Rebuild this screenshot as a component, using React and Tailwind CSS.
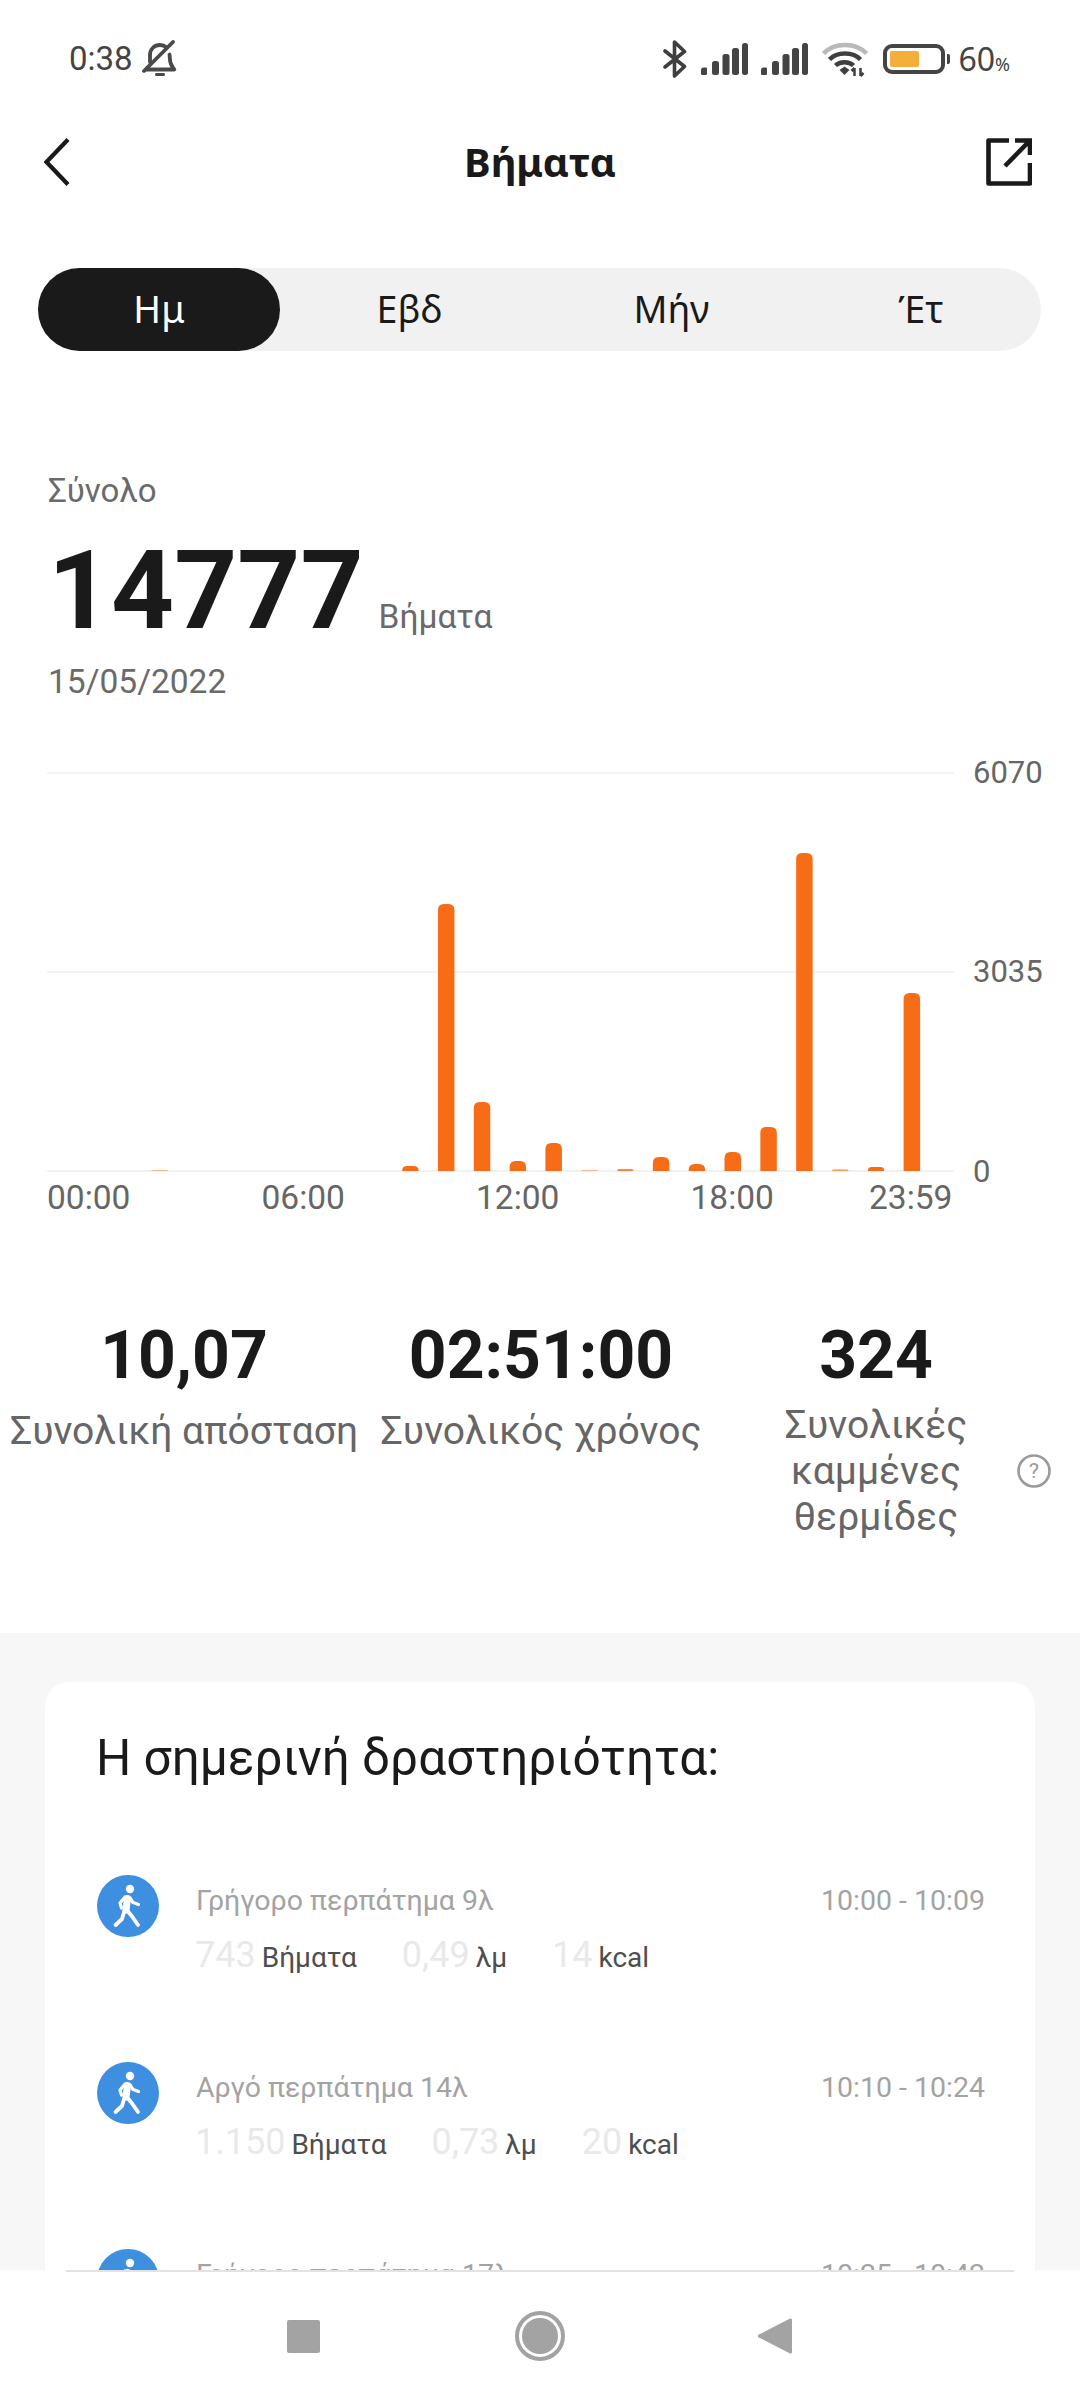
import React from "react";

const bars = [
  [2, 1, 0.45], [9, 5, 1], [10, 267, 1], [11, 69, 1], [12, 10, 1], [13, 28, 1], [14, 1, 0.45], [15, 2, 0.8],
  [16, 14, 1], [17, 7, 1], [18, 19, 1], [19, 44, 1], [20, 318, 1], [21, 1.5, 0.7], [22, 4, 1], [23, 178, 1],
];

function Chart() {
  const x = (h) => 88 + h * 35.82;
  return (
    <svg width="1080" height="412" viewBox="0 0 1080 412" className="block">
      <rect x="47" y="0" width="907" height="2" fill="#f3f3f3" />
      <rect x="47" y="199" width="907" height="2" fill="#f3f3f3" />
      <rect x="47" y="398" width="907" height="2" fill="#f1f1f1" />
      {bars.map(([h, v, o]) => {
        const bx = x(h) - 8.25;
        const top = 399 - v;
        const r = Math.min(6, v);
        return (
          <path
            key={h}
            d={`M${bx} 399 V${top + r} Q${bx} ${top} ${bx + r} ${top} H${bx + 16.5 - r} Q${bx + 16.5} ${top} ${bx + 16.5} ${top + r} V399 Z`}
            fill="#f76d17"
            opacity={o}
          />
        );
      })}
    </svg>
  );
}

function Signal() {
  return (
    <svg width="47" height="32" viewBox="0 0 47 32" fill="#444">
      <path d="M0 27a2.500 2.500 0 0 1 2.500-2.500h2.500a1 1 0 0 1 1 1V31a1 1 0 0 1-1 1H1a1 1 0 0 1-1-1z" />
      <rect x="11" y="18" width="7" height="14" rx="2.500" />
      <rect x="21.500" y="11" width="7" height="21" rx="2.500" />
      <rect x="31" y="5" width="7" height="27" rx="2.500" />
      <rect x="41" y="0" width="6" height="32" rx="2.500" />
    </svg>
  );
}

function Walker() {
  return (
    <svg width="62" height="62" viewBox="0 0 62 62" fill="none" stroke="#fff" strokeLinecap="round" strokeLinejoin="round">
      <circle cx="33" cy="14" r="4.200" fill="#fff" stroke="none" />
      <path d="M30.500 23.500 29 35" strokeWidth="7" />
      <path d="M29 34 35.500 42 41 50" strokeWidth="3.800" />
      <path d="M27 37 25 44 18.500 50" strokeWidth="3.800" />
      <path d="M28 22 23 28 24.500 33" strokeWidth="3.200" />
      <path d="M33 23 36 27.500 41.500 29.500" strokeWidth="3.200" />
    </svg>
  );
}

function Activity({ title, time, steps, km, kcal }) {
  const Stat = ({ n, u }) => (
    <div className="flex items-baseline gap-[6px]">
      <span className="text-[36px] leading-[40px] text-[#e9e9e9]">{n}</span>
      <span className="text-[28px] leading-[40px] text-[#4e4e4e]">{u}</span>
    </div>
  );
  return (
    <div className="flex h-[187px] shrink-0">
      <div className="mt-[2px] h-[62px] w-[62px] shrink-0 rounded-full bg-[#3f8fe0]">
        <Walker />
      </div>
      <div className="ml-[36px] flex-1 pt-[10px]">
        <div className="flex items-center justify-between pl-[1px] text-[28.5px] leading-[36px] text-[#a3a3a3]">
          <span>{title}</span>
          <span>{time}</span>
        </div>
        <div className="mt-[16px] flex gap-[45px]">
          <Stat n={steps} u="Βήματα" />
          <Stat n={km} u="λμ" />
          <Stat n={kcal} u="kcal" />
        </div>
      </div>
    </div>
  );
}

export default function App() {
  return (
    <div className="flex h-[2400px] w-[1080px] flex-col overflow-hidden bg-white font-['Roboto',sans-serif]">
      <div className="flex-1 overflow-hidden">
        {/* status bar */}
        <div className="flex h-[118px] items-start justify-between pl-[69px] pr-[70px] pt-[39px] text-[#444]">
          <div className="flex items-center gap-[8px]">
            <span className="text-[33px] leading-[40px]">0:38</span>
            <svg width="38" height="38" viewBox="0 0 38 38" fill="none" stroke="#4a4a4a" strokeWidth="3.800" strokeLinecap="round" strokeLinejoin="round">
              <path d="M9 22V15c0-6 4.500-10 10-10 2.500 0 4.800.9 6.500 2.400" />
              <path d="M28.500 14.500c.2 1 .3 2 .3 3 0 5 1 7 2.500 9l2 3H5l2-2.300" />
              <path d="M3 31 32 2" />
              <path d="M15.500 34.500h7" strokeWidth="3" />
            </svg>
          </div>
          <div className="flex items-center">
            <svg width="24" height="38" viewBox="0 0 24 38" fill="none" stroke="#3f3f3f" strokeWidth="3.600" strokeLinecap="round" strokeLinejoin="round">
              <path d="M2 11 21.500 26.500 11.500 36V2L21.500 11.500 2 27" />
            </svg>
            <div className="ml-[14px]"><Signal /></div>
            <div className="ml-[13px]"><Signal /></div>
            <svg className="ml-[14px]" width="46" height="36" viewBox="0 0 46 36" fill="none">
              <path d="M1.500 12.500C12 1 34 1 44.500 12.500" stroke="#b9b9b9" strokeWidth="4.500" />
              <path d="M7.500 18.500C15 10.500 31 10.500 38.500 18.500" stroke="#3f3f3f" strokeWidth="4.500" />
              <path d="M13.500 24.500C18 20 27 20 31.500 24.500" stroke="#3f3f3f" strokeWidth="4.500" />
              <path d="M17.500 29 22.500 25.500 27.500 29 22.500 34Z" fill="#3f3f3f" />
              <path d="M32.500 27V35M29.500 30l3-3M38.500 35V27M41.500 32l-3 3" stroke="#3f3f3f" strokeWidth="2.500" />
            </svg>
            <div className="ml-[15px] flex items-center">
              <div className="h-[30px] w-[62px] rounded-[9px] border-[4px] border-[#444] p-[3px]">
                <div className="h-full w-[29px] rounded-[2px] bg-[#f4ae3b]" />
              </div>
              <div className="ml-[2px] h-[10px] w-[3px] rounded-r-[2px] bg-[#444]" />
            </div>
            <span className="ml-[8px] text-[32px] leading-[40px] font-['Noto_Sans',sans-serif]">60</span>
            <span className="mt-[10px] text-[18px] leading-[20px] font-['Noto_Sans',sans-serif]">%</span>
          </div>
        </div>

        {/* header */}
        <div className="flex h-[88px] items-center justify-between pl-[44px] pr-[48px]">
          <div className="w-[50px]">
            <svg width="26" height="48" viewBox="0 0 26 48" fill="none" stroke="#1a1a1a" strokeWidth="4.200">
              <path d="M24 1.500 2.500 24 24 46.500" />
            </svg>
          </div>
          <span className="text-[40px] leading-[50px] font-bold text-[#1a1a1a] font-['Noto_Sans',sans-serif]">Βήματα</span>
          <svg width="46" height="48" viewBox="0 0 46 48" fill="none" stroke="#1a1a1a" strokeWidth="4.600">
            <path d="M23 2.500H2.500V45.500H44V25" strokeLinejoin="round" />
            <path d="M19 28 43 3.500M29 2.500H44V17" />
          </svg>
        </div>

        {/* tabs */}
        <div className="ml-[38px] mr-[39px] mt-[62px] flex h-[83px] items-center rounded-full bg-[#f1f1f1] text-[37.5px] text-[#1a1a1a] font-['Noto_Sans',sans-serif]">
          <div className="flex h-full w-[242px] items-center justify-center rounded-full bg-[#1a1a1a] text-white">Ημ</div>
          <div className="flex w-[259px] items-center justify-center">Εβδ</div>
          <div className="flex w-[265px] items-center justify-center">Μήν</div>
          <div className="flex w-[234px] items-center justify-center">Έτ</div>
        </div>

        {/* summary */}
        <div className="pl-[48px] pt-[120px]">
          <div className="text-[33px] leading-[40px] text-[#6a6a6a]">Σύνολο</div>
          <div className="mt-[24px] flex items-baseline">
            <span className="text-[110px] leading-[112px] font-bold text-[#1a1a1a]">14777</span>
            <span className="ml-[15px] text-[33.5px] text-[#6a6a6a]">Βήματα</span>
          </div>
          <div className="mt-[15px] text-[33.5px] leading-[40px] text-[#6a6a6a]">15/05/2022</div>
        </div>

        {/* chart */}
        <div className="relative mt-[70px]">
          <Chart />
          <span className="absolute left-[973px] top-[-19px] text-[31px] leading-[40px] text-[#666]">6070</span>
          <span className="absolute left-[973px] top-[180px] text-[31px] leading-[40px] text-[#666]">3035</span>
          <span className="absolute left-[973px] top-[380px] text-[31px] leading-[40px] text-[#666]">0</span>
          <div className="absolute left-[47px] top-[406px] flex text-[33.5px] leading-[40px] text-[#666]">
            <span className="w-[214.500px]">00:00</span>
            <span className="w-[214.500px]">06:00</span>
            <span className="w-[214.500px]">12:00</span>
            <span className="w-[178.500px]">18:00</span>
            <span>23:59</span>
          </div>
        </div>

        {/* stats */}
        <div className="mt-[132px] flex h-[317px] items-start">
          <div className="w-[368px] text-center">
            <div className="text-[66px] leading-[80px] font-bold text-[#1a1a1a]">10,07</div>
            <div className="mt-[12px] text-[39px] leading-[46px] text-[#666] whitespace-nowrap">Συνολική απόσταση</div>
          </div>
          <div className="ml-[3px] w-[340px] text-center">
            <div className="text-[66px] leading-[80px] font-bold text-[#1a1a1a]">02:51:00</div>
            <div className="mt-[12px] text-[39px] leading-[46px] text-[#666] whitespace-nowrap">Συνολικός χρόνος</div>
          </div>
          <div className="ml-[37px] w-[256px] text-center">
            <div className="text-[66px] leading-[80px] font-bold text-[#1a1a1a]">324</div>
            <div className="mt-[6px] text-[39px] leading-[46px] text-[#666]">Συνολικές<br />καμμένες<br />θερμίδες</div>
          </div>
          <svg className="ml-[12px] mt-[137px]" width="36" height="36" viewBox="0 0 36 36" fill="none">
            <circle cx="18" cy="18" r="15.500" stroke="#9a9a9a" strokeWidth="2.600" />
            <text x="18" y="25" textAnchor="middle" fontSize="21" fill="#9a9a9a" fontFamily="Roboto">?</text>
          </svg>
        </div>

        {/* activity */}
        <div className="bg-[#f7f7f7] px-[45px] pt-[49px]">
          <div className="rounded-[24px] bg-white pl-[51px] pr-[50px] pt-[46px]">
            <div className="text-[49.500px] leading-[60px] text-[#1a1a1a]">Η σημερινή δραστηριότητα:</div>
            <div className="mt-[85px] pl-[1px]">
              <Activity title="Γρήγορο περπάτημα 9λ" time="10:00 - 10:09" steps="743" km="0,49" kcal="14" />
              <Activity title="Αργό περπάτημα 14λ" time="10:10 - 10:24" steps="1.150" km="0,73" kcal="20" />
              <Activity title="Γρήγορο περπάτημα 17λ" time="10:25 - 10:42" steps="955" km="0,64" kcal="17" />
            </div>
          </div>
        </div>
      </div>

      {/* navigation */}
      <div className="h-[130px] shrink-0 bg-white px-[66px]">
        <div className="h-[2px] bg-[#e3e3e3]" />
        <div className="flex h-[128px] items-center">
          <div className="ml-[221px] h-[33px] w-[33px] rounded-[2px] bg-[#a3a3a3]" />
          <div className="ml-[195px] flex h-[50px] w-[50px] items-center justify-center rounded-full border-[4px] border-[#a3a3a3]">
            <div className="h-[36px] w-[36px] rounded-full bg-[#a3a3a3]" />
          </div>
          <svg className="ml-[193px]" width="34" height="38" viewBox="0 0 34 38" fill="#a3a3a3">
            <path d="M32 1.500a1.500 1.500 0 0 1 2 1.500v32a1.500 1.500 0 0 1-2 1.500L1 20.500a1.500 1.500 0 0 1 0-3z" />
          </svg>
        </div>
      </div>
    </div>
  );
}
